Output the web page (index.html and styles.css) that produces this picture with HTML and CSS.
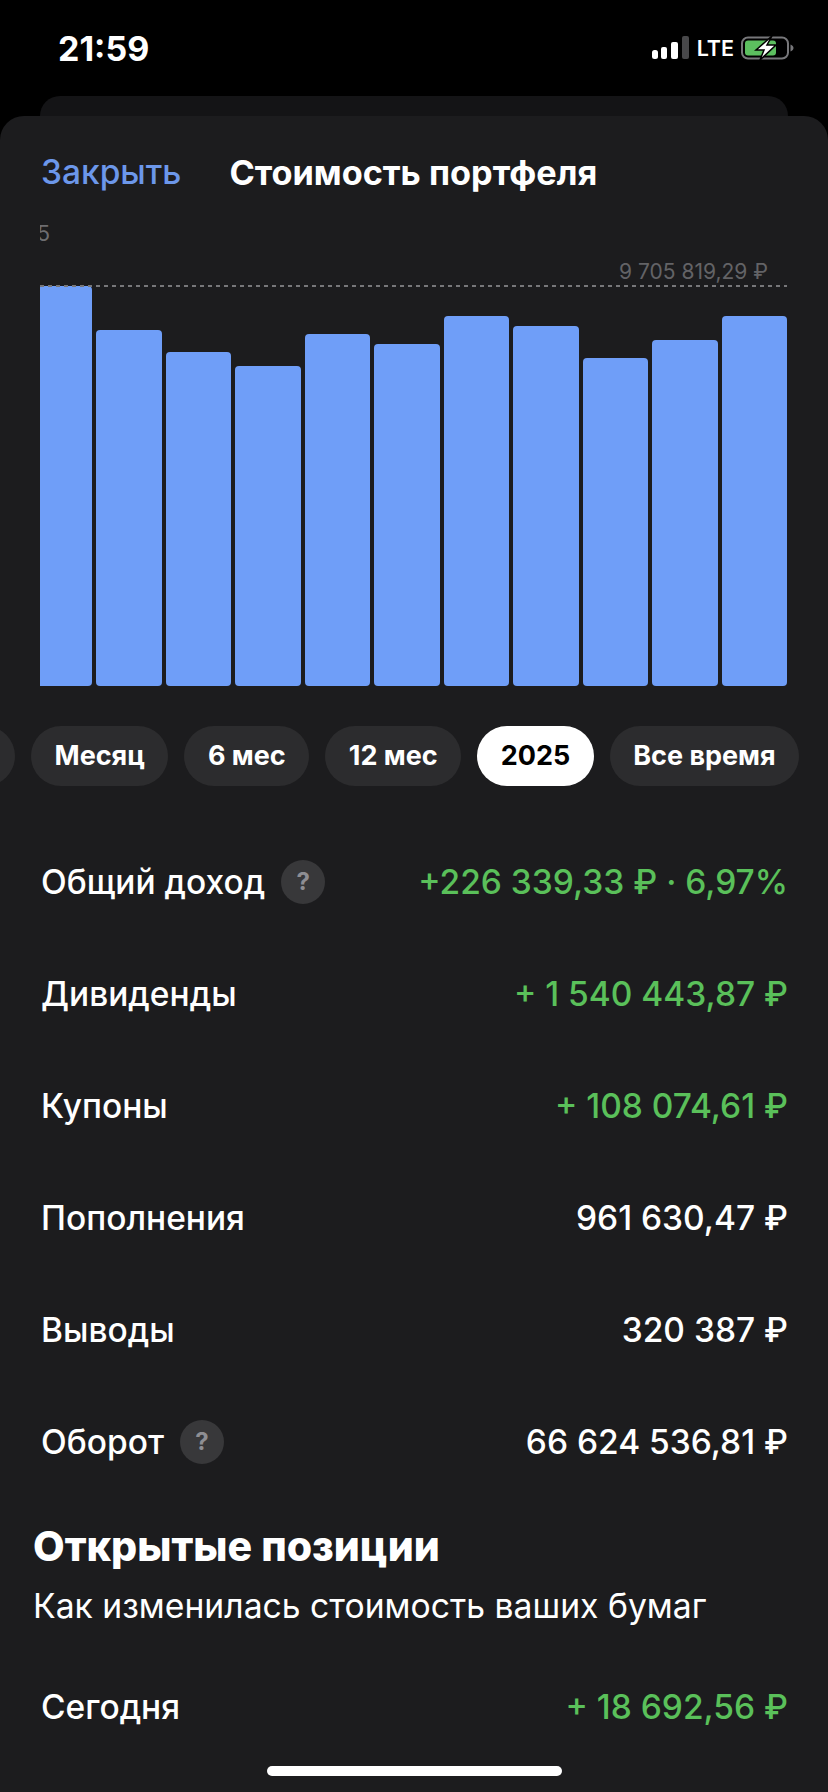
FILE: index.html
```html
<!DOCTYPE html>
<html lang="ru">
<head>
    <meta charset="UTF-8">
    <meta name="viewport" content="width=device-width, initial-scale=1.0">
    <title>Стоимость портфеля</title>
    <link rel="stylesheet" href="styles.css">
</head>
<body>
    <div class="screen">
        <div class="status-bar">
            <span class="status-time">21:59</span>
            <div class="status-icons">
                <svg class="signal" width="38" height="24" viewBox="0 0 38 24">
                    <rect x="0" y="14" width="6" height="9" rx="2.5" fill="#fff"/>
                    <rect x="9" y="11" width="6" height="12" rx="2" fill="#fff"/>
                    <rect x="19" y="6" width="7" height="17" rx="2" fill="#fff"/>
                    <rect x="30" y="0" width="7" height="23" rx="2" fill="#48484a"/>
                </svg>
                <span class="status-lte">LTE</span>
                <svg class="battery" width="53" height="24" viewBox="0 0 53 24">
                    <rect x="1" y="1.500" width="46" height="21" rx="6" fill="none" stroke="#77777a" stroke-width="2"/>
                    <rect x="4" y="4.500" width="31" height="15" rx="3" fill="#5cbf5f"/>
                    <path d="M49.500 8.500 C51.500 9.500 52.500 10.500 52.500 12 C52.500 13.500 51.500 14.500 49.500 15.500 Z" fill="#77777a"/>
                    <path d="M31 0 L15 14 L23 14 L19 24 L35 9 L26 9 Z" fill="#fff" stroke="#000" stroke-width="1.500"/>
                </svg>
            </div>
        </div>

        <div class="back-card"></div>

        <div class="sheet">
            <div class="sheet-header">
                <a class="close-link">Закрыть</a>
                <span class="sheet-title">Стоимость портфеля</span>
            </div>

            <div class="chart">
                <div class="chart-axis"><span>5</span></div>
                <div class="chart-max">9 705 819,29 ₽</div>
                <div class="chart-line"></div>
                <div class="chart-bars">
                    <div class="bar" style="height: 400px"></div>
                    <div class="bar" style="height: 356px"></div>
                    <div class="bar" style="height: 334px"></div>
                    <div class="bar" style="height: 320px"></div>
                    <div class="bar" style="height: 352px"></div>
                    <div class="bar" style="height: 342px"></div>
                    <div class="bar" style="height: 370px"></div>
                    <div class="bar" style="height: 360px"></div>
                    <div class="bar" style="height: 328px"></div>
                    <div class="bar" style="height: 346px"></div>
                    <div class="bar" style="height: 370px"></div>
                </div>
            </div>

            <div class="periods">
                <span class="pill pill-cut"></span>
                <span class="pill">Месяц</span>
                <span class="pill">6 мес</span>
                <span class="pill">12 мес</span>
                <span class="pill active">2025</span>
                <span class="pill">Все время</span>
            </div>

            <div class="stats">
                <div class="stat-row">
                    <div class="stat-name">Общий доход <span class="help">?</span></div>
                    <div class="stat-value green">+226 339,33 ₽ · 6,97%</div>
                </div>
                <div class="stat-row">
                    <div class="stat-name">Дивиденды</div>
                    <div class="stat-value green">+ 1 540 443,87 ₽</div>
                </div>
                <div class="stat-row">
                    <div class="stat-name">Купоны</div>
                    <div class="stat-value green">+ 108 074,61 ₽</div>
                </div>
                <div class="stat-row">
                    <div class="stat-name">Пополнения</div>
                    <div class="stat-value">961 630,47 ₽</div>
                </div>
                <div class="stat-row">
                    <div class="stat-name">Выводы</div>
                    <div class="stat-value">320 387 ₽</div>
                </div>
                <div class="stat-row">
                    <div class="stat-name">Оборот <span class="help">?</span></div>
                    <div class="stat-value">66 624 536,81 ₽</div>
                </div>
            </div>

            <h2 class="section-title">Открытые позиции</h2>
            <p class="section-sub">Как изменилась стоимость ваших бумаг</p>

            <div class="stats">
                <div class="stat-row">
                    <div class="stat-name">Сегодня</div>
                    <div class="stat-value green">+ 18 692,56 ₽</div>
                </div>
            </div>
        </div>

        <div class="home-indicator"></div>
    </div>
</body>
</html>
```

FILE: styles.css
```css
* {
    box-sizing: border-box;
}
body {
    margin: 0;
    background-color: #000;
    color: #fff;
    font-family: 'Inter', 'Noto Sans', sans-serif;
}
.screen {
    position: relative;
    width: 828px;
    height: 1792px;
    overflow: hidden;
    background-color: #000;
}

/* status bar */
.status-bar {
    display: flex;
    justify-content: space-between;
    align-items: center;
    height: 96px;
    padding: 0 34px 0 58px;
}
.status-time {
    font-size: 34px;
    font-weight: 700;
}
.status-icons {
    display: flex;
    align-items: center;
    gap: 7px;
}
.status-lte {
    font-size: 21.500px;
    font-weight: 600;
}

/* sheet */
.back-card {
    height: 20px;
    margin: 0 40px;
    background-color: #141416;
    border-radius: 22px 22px 0 0;
}
.sheet {
    height: 1676px;
    background-color: #1c1c1e;
    border-radius: 24px 24px 0 0;
    overflow: hidden;
}
.sheet-header {
    display: flex;
    align-items: center;
    gap: 48px;
    height: 58px;
    margin-top: 27px;
    padding: 0 41px;
}
.close-link {
    color: #6c97ea;
    font-size: 33.500px;
    font-weight: 500;
}
.sheet-title {
    font-size: 34.300px;
    font-weight: 700;
}

/* chart */
.chart {
    position: relative;
    height: 482px;
    margin: 3px 41px 0 40px;
}
.chart-axis {
    position: absolute;
    top: 17px;
    left: 0;
    width: 10px;
    overflow: hidden;
    direction: rtl;
    color: #6d6d70;
    font-size: 22px;
    line-height: 24px;
}
.chart-max {
    position: absolute;
    top: 56px;
    right: 19px;
    color: #636366;
    font-size: 21px;
    line-height: 24px;
    white-space: nowrap;
}
.chart-line {
    position: absolute;
    top: 81px;
    left: 0;
    right: 0;
    height: 2px;
    background: repeating-linear-gradient(90deg, #77777a 0 4px, transparent 4px 8px);
    z-index: 1;
}
.chart-bars {
    display: flex;
    align-items: flex-end;
    gap: 4.400px;
    height: 100%;
}
.bar {
    flex: 1;
    background-color: #6f9ef8;
    border-radius: 4px;
}
.bar:first-child {
    flex: 0 0 52px;
    border-radius: 0 4px 4px 0;
}

/* periods */
.periods {
    display: flex;
    gap: 16px;
    margin: 40px 0 40px -99px;
}
.pill {
    flex: none;
    height: 60px;
    padding: 0 23.500px;
    background-color: #2c2c2e;
    border-radius: 30px;
    font-size: 27px;
    font-weight: 700;
    line-height: 60px;
}
.pill-cut {
    width: 114px;
}
.pill.active {
    background-color: #fff;
    color: #000;
}

/* stats */
.stats {
    padding: 0 40px 0 41px;
}
.stat-row {
    display: flex;
    justify-content: space-between;
    align-items: center;
    height: 112px;
}
.stat-name {
    display: flex;
    align-items: center;
    gap: 16px;
    font-size: 33.500px;
    font-weight: 500;
}
.stat-value {
    font-size: 33.500px;
    font-weight: 500;
}
.green {
    color: #5ac05a;
}
.help {
    width: 44px;
    height: 44px;
    background-color: #38383a;
    border-radius: 50%;
    color: #8e8e93;
    font-size: 24px;
    font-weight: 700;
    line-height: 44px;
    text-align: center;
}
.section-title {
    margin: 25px 0 0;
    padding: 0 33px;
    font-size: 41px;
    font-weight: 800;
    line-height: 46px;
}
.section-sub {
    margin: 14px 0 22px;
    padding: 0 33px;
    font-size: 33.700px;
    font-weight: 400;
    line-height: 46px;
}
.home-indicator {
    position: absolute;
    left: 267px;
    bottom: 16px;
    width: 295px;
    height: 10px;
    background-color: #fff;
    border-radius: 5px;
}
```
